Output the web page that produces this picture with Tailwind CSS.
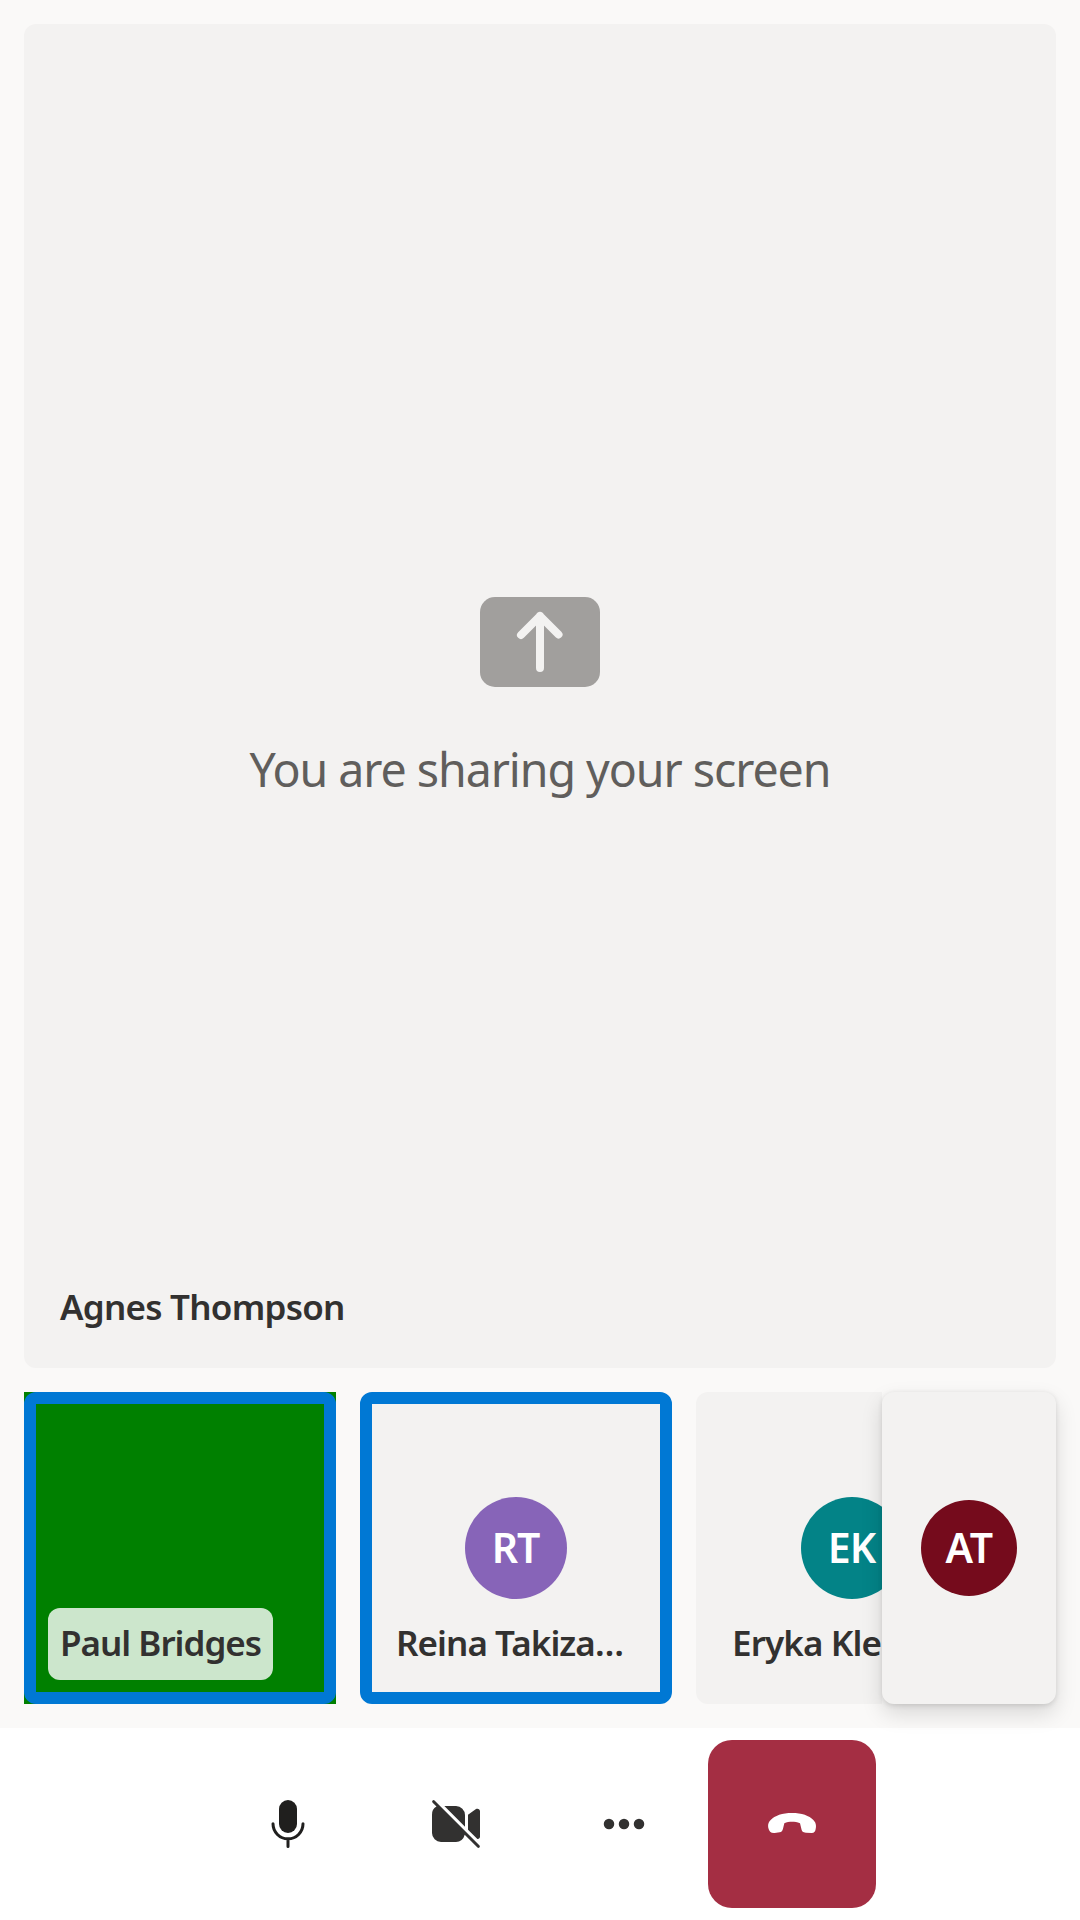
<!DOCTYPE html>
<html lang="en">
<head>
<meta charset="utf-8">
<title>Call</title>
<script src="https://cdn.jsdelivr.net/npm/@tailwindcss/browser@4"></script>
</head>
<body class="bg-[#faf9f8] font-['Segoe_UI','Noto_Sans',sans-serif] text-[#323130]">
<div class="flex h-[1920px] w-[1080px] flex-col overflow-hidden">
  <main class="flex flex-1 flex-col gap-6 p-6">
    <!-- Screen share tile -->
    <section class="flex h-[1344px] flex-col items-center rounded-xl bg-[#f3f2f1] pb-6 pt-[573px]">
      <svg class="h-[90px] w-[120px] shrink-0" viewBox="0 0 120 90" fill="none">
        <rect width="120" height="90" rx="15" fill="#a19f9d"/>
        <path d="M60 71V19M41 38L60 19L78.500 37.500" stroke="#f3f2f1" stroke-width="8" stroke-linecap="round" stroke-linejoin="round"/>
      </svg>
      <p class="mt-[50px] whitespace-nowrap text-[46.5px] leading-[64px] tracking-[-1.05px] text-[#605e5c]"><span>You are sharing your screen</span></p>
      <div class="mt-auto ml-6 flex h-[72px] items-center self-start px-3 pb-[2px] text-[35px] font-semibold tracking-[-0.75px]"><span>Agnes Thompson</span></div>
    </section>

    <!-- Participants -->
    <section class="flex h-[312px]">
      <div class="flex flex-1 gap-6 overflow-hidden">
        <div class="h-[312px] w-[312px] shrink-0 bg-[#008000]">
          <div class="flex h-full items-end rounded-xl border-[12px] border-[#0078d4] p-3">
            <div class="flex h-[72px] w-[225px] items-center whitespace-nowrap rounded-xl bg-white/80 px-3 pb-[2px] text-[35px] font-semibold tracking-[-1px]"><span>Paul Bridges</span></div>
          </div>
        </div>
        <div class="flex h-[312px] w-[312px] shrink-0 flex-col rounded-xl border-[12px] border-[#0078d4] bg-[#f3f2f1] px-3 pb-3 pt-[93px]">
          <div class="flex size-[102px] items-center justify-center self-center rounded-full bg-[#8764b8] pb-[1px] pr-[1px] text-[41px] font-semibold tracking-[-1px] text-white"><span>RT</span></div>
          <div class="mt-auto flex h-[72px] items-center px-3 pb-[2px] text-[35px] font-semibold tracking-[-0.95px]"><span class="whitespace-nowrap">Reina Takiza…</span></div>
        </div>
        <div class="flex h-[312px] w-[312px] shrink-0 flex-col rounded-xl bg-[#f3f2f1] px-6 pb-6 pt-[105px]">
          <div class="flex size-[102px] items-center justify-center self-center rounded-full bg-[#038387] pb-[1px] pr-[1px] text-[41px] font-semibold tracking-[-1px] text-white"><span>EK</span></div>
          <div class="mt-auto flex h-[72px] items-center px-3 pb-[2px] text-[35px] font-semibold tracking-[-0.9px]"><span class="whitespace-nowrap">Eryka Klein</span></div>
        </div>
      </div>
      <div class="z-10 flex w-[174px] shrink-0 items-center justify-center rounded-xl bg-[#f3f2f1] shadow-[0_9.6px_21.6px_rgba(0,0,0,0.132),0_1.8px_5.4px_rgba(0,0,0,0.108)]">
        <div class="flex size-24 items-center justify-center rounded-full bg-[#750b1c] pb-[1px] text-[41px] font-semibold tracking-[-0.5px] text-white"><span>AT</span></div>
      </div>
    </section>
  </main>

  <!-- Call controls -->
  <footer class="flex h-48 shrink-0 items-center justify-center bg-white">
    <button class="flex size-[168px] items-center justify-center" aria-label="Mute">
      <svg class="size-[60px]" viewBox="0 0 20 20" fill="none" stroke="#201f1e" stroke-linecap="round">
        <rect x="7" y="2" width="6" height="11" rx="3" fill="#201f1e" stroke="none"/>
        <path d="M5 9.950a5 5 0 0 0 10 0M10 15.200v2.300"/>
      </svg>
    </button>
    <button class="flex size-[168px] items-center justify-center" aria-label="Turn camera on">
      <svg class="size-[60px]" viewBox="0 0 20 20" fill="#323130">
        <path d="M2.850 2.150a.5.5 0 0 0-.7.7L3.500 4.200A3 3 0 0 0 2 7v6a3 3 0 0 0 3 3h5a3 3 0 0 0 2.900-2.390l4.250 4.240a.5.5 0 0 0 .7-.7l-15-15Z"/>
        <path d="M13 10.880V7a3 3 0 0 0-3-3H6.120L13 10.880ZM14 11.880l3.130 3.120c.45.1.87-.24.87-.71V5.720c0-.7-.78-1.080-1.330-.68L14 6.930v4.950Z"/>
      </svg>
    </button>
    <button class="flex size-[168px] items-center justify-center" aria-label="More">
      <svg class="size-[60px]" viewBox="0 0 60 60" fill="#323130">
        <circle cx="15" cy="30" r="5.250"/><circle cx="30" cy="30" r="5.250"/><circle cx="45" cy="30" r="5.250"/>
      </svg>
    </button>
    <button class="flex size-[168px] items-center justify-center rounded-3xl bg-[#a42e43] pb-[1px]" aria-label="Leave">
      <svg class="h-[21px] w-12" viewBox="0 0 144 63" fill="#fff">
        <path d="M72 0C101 0 124 8 136 21C143 28 145 35 143.500 45C142.500 55 139 60 131 60L114 59C104 58 102 55 100 47L96 31C88 27 80 26 72 26C64 26 56 27 49 31L45 47C43 54 41 57 35 58L20 60C9 61 3 55 1 45C-1 35 1 28 8 21C20 8 43 0 72 0Z"/>
      </svg>
    </button>
  </footer>
</div>
</body>
</html>
